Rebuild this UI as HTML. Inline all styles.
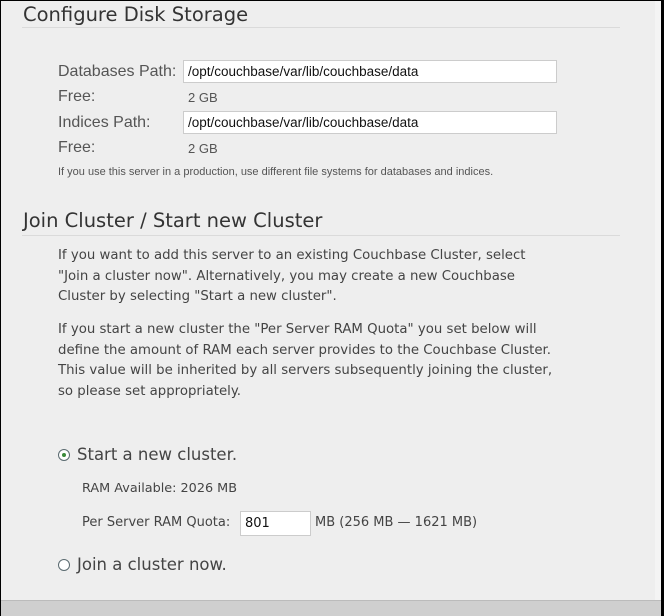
<!DOCTYPE html>
<html><head><style>
body{margin:0;width:664px;height:616px;overflow:hidden;background:#000;position:relative;font-family:"DejaVu Sans","Liberation Sans",sans-serif;}
#p{position:absolute;left:1px;top:1px;width:654px;height:614px;background:#eeeeee;}
#rs{position:absolute;left:655px;top:1px;width:6px;height:614px;background:#f4f4f4;}
#bb{position:absolute;left:1px;top:600px;width:660px;height:15px;background:#cfcfcf;border-top:1px solid #bbb;}
.a{position:absolute;white-space:nowrap;}
h1{position:absolute;margin:0;font-weight:normal;font-size:19.5px;color:#333;white-space:nowrap;}
.ln{position:absolute;left:22px;width:598px;height:1px;background:#dadada;}
.l{font-family:"Liberation Sans",sans-serif;font-size:16px;color:#555;}
.v{font-family:"Liberation Sans",sans-serif;font-size:13px;color:#555;}
.in{position:absolute;background:#fff;border:1px solid #ccc;font-family:"Liberation Sans",sans-serif;font-size:13.5px;color:#111;box-sizing:border-box;padding:3px 0 0 4px;}
.t{font-size:13.3px;color:#444;line-height:20.5px;}
.r{position:absolute;width:10px;height:10px;border:1px solid #5a6a70;border-radius:50%;background:#fff;}
</style></head><body>
<div id="p"></div><div id="rs"></div><div id="bb"></div>
<h1 style="left:23px;top:3px;">Configure Disk Storage</h1>
<div class="ln" style="top:27px"></div>
<div class="a l" style="left:58px;top:63px">Databases Path:</div>
<div class="in" style="left:183px;top:60px;width:374px;height:23px">/opt/couchbase/var/lib/couchbase/data</div>
<div class="a l" style="left:58px;top:88px">Free:</div>
<div class="a v" style="left:188px;top:90px">2 GB</div>
<div class="a l" style="left:58px;top:114px">Indices Path:</div>
<div class="in" style="left:183px;top:111px;width:374px;height:23px">/opt/couchbase/var/lib/couchbase/data</div>
<div class="a l" style="left:58px;top:139px">Free:</div>
<div class="a v" style="left:188px;top:141px">2 GB</div>
<div class="a" style="left:58px;top:166px;font-family:'Liberation Sans',sans-serif;font-size:11px;color:#555">If you use this server in a production, use different file systems for databases and indices.</div>
<h1 style="left:23px;top:209px;">Join Cluster / Start new Cluster</h1>
<div class="ln" style="top:235px"></div>
<div class="a t" style="left:58px;top:246px">If you want to add this server to an existing Couchbase Cluster, select<br>"Join a cluster now". Alternatively, you may create a new Couchbase<br>Cluster by selecting "Start a new cluster".</div>
<div class="a t" style="left:58px;top:320px">If you start a new cluster the "Per Server RAM Quota" you set below will<br>define the amount of RAM each server provides to the Couchbase Cluster.<br>This value will be inherited by all servers subsequently joining the cluster,<br>so please set appropriately.</div>
<div class="r" style="left:58px;top:449px"><div style="position:absolute;left:3px;top:3px;width:4px;height:4px;border-radius:50%;background:#3a8a3a"></div></div>
<div class="a" style="left:77px;top:445px;font-size:16.5px;color:#444">Start a new cluster.</div>
<div class="a" style="left:82px;top:481px;font-size:12.8px;color:#444">RAM Available: 2026 MB</div>
<div class="a" style="left:82px;top:515px;font-size:13px;color:#444">Per Server RAM Quota:</div>
<div class="in" style="left:240px;top:511px;width:71px;height:25px;font-family:'DejaVu Sans',sans-serif;font-size:13px;padding-top:4px">801</div>
<div class="a" style="left:315px;top:515px;font-size:13px;color:#444">MB (256 MB — 1621 MB)</div>
<div class="r" style="left:58px;top:559px"></div>
<div class="a" style="left:77px;top:555px;font-size:16.5px;color:#444">Join a cluster now.</div>
</body></html>
